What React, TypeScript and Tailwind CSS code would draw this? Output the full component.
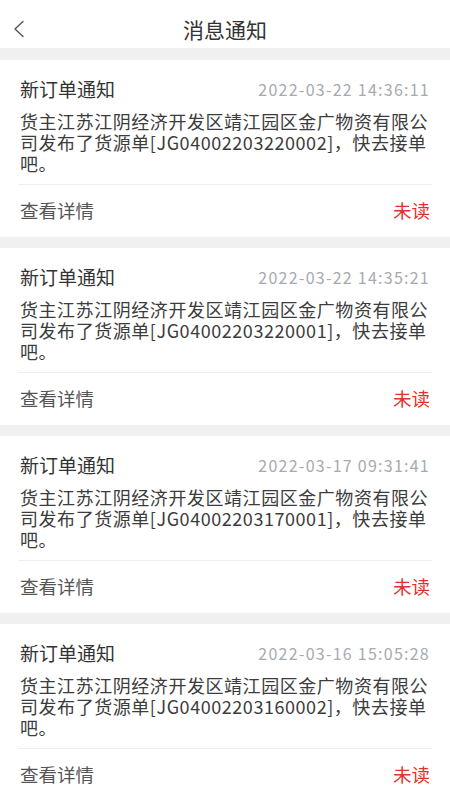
import React from 'react';

const notices = [
  { time: '2022-03-22 14:36:11', no: 'JG04002203220002' },
  { time: '2022-03-22 14:35:21', no: 'JG04002203220001' },
  { time: '2022-03-17 09:31:41', no: 'JG04002203170001' },
  { time: '2022-03-16 15:05:28', no: 'JG04002203160002' },
];

const font = { fontFamily: '"Noto Sans CJK SC", "Noto Sans", sans-serif' };

function NoticeCard({ time, no }: { time: string; no: string }) {
  return (
    <div className="bg-white">
      <div className="px-5 pt-[17px] pb-[10px]">
        <div className="flex h-[24px] items-center justify-between">
          <span className="text-[19px] text-[#333333]">新订单通知</span>
          <span className="text-[16px] tracking-[1.25px] text-[#a6aab1]">{time}</span>
        </div>
        <p className="mt-[10px] text-[18px] leading-[21px] tracking-[0.55px] text-[#3c3c3c]">
          货主江苏江阴经济开发区靖江园区金广物资有限公司发布了货源单[{no}]，快去接单吧。
        </p>
      </div>
      <div className="mx-[18px] flex h-[53px] items-center justify-between border-t border-[#eeeeee] px-[2px]">
        <span className="text-[18.5px] text-[#555555]">查看详情</span>
        <span className="text-[18.5px] text-[#e2312d]">未读</span>
      </div>
    </div>
  );
}

export default function App() {
  return (
    <div className="min-h-screen bg-[#f0f0f0]" style={font}>
      <div className="relative flex h-[48px] items-center justify-center bg-white pt-[9px]">
        <button className="absolute left-[12px] top-[20px]">
          <svg width="14" height="18" viewBox="0 0 14 18" fill="none">
            <path d="M11 1.5 L3 9 L11 16.5" stroke="#555555" strokeWidth="1.4" strokeLinecap="round" strokeLinejoin="round" />
          </svg>
        </button>
        <h1 className="text-[21px] leading-[28px] text-[#333333]">消息通知</h1>
      </div>
      <div className="flex flex-col gap-[11px] pt-[12px]">
        {notices.map(n => (
          <NoticeCard key={n.no} time={n.time} no={n.no} />
        ))}
      </div>
    </div>
  );
}
